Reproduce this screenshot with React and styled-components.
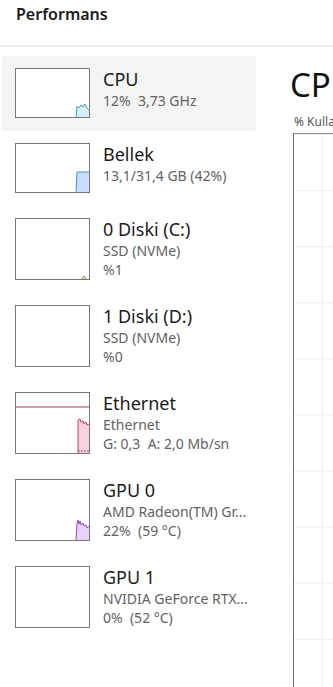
import React from "react";
import styled, { createGlobalStyle } from "styled-components";

const Global = createGlobalStyle`
  html, body { margin: 0; padding: 0; background: #ffffff; overflow: hidden; }
  body { font-family: "Noto Sans", "Open Sans", sans-serif; color: #1b1b1b; }
`;

const Page = styled.div`
  width: 100vw;
  height: 100vh;
  overflow: hidden;
  display: flex;
  flex-direction: column;
`;

const Header = styled.header`
  height: 47px;
  box-sizing: border-box;
  padding: 4px 0 0 16px;
  font-size: 16px;
  line-height: 20px;
  font-weight: 600;
  color: #1b1b1b;
  border-bottom: 2px solid #ececec;
  flex: 0 0 auto;
`;

const Body = styled.div`
  display: flex;
  flex: 1 1 auto;
  min-height: 0;
`;

const Sidebar = styled.nav`
  flex: 0 0 auto;
  width: 254px;
  min-width: 0;
  padding: 9px 0 0 2px;
  display: flex;
  flex-direction: column;
`;

const Row = styled.div`
  display: flex;
  align-items: flex-start;
  gap: 13px;
  padding: 12px 13px 13px;
  border-radius: 3px;
  min-width: 0;
  background: ${(p) => (p.$active ? "#f4f4f4" : "transparent")};
`;

const Thumb = styled.div`
  flex: 0 0 75px;
  height: ${(p) => p.$h}px;
  box-sizing: border-box;
  border: 1px solid #777777;
  background: #ffffff;
  overflow: hidden;
  svg { display: block; width: 100%; height: 100%; }
`;

const Info = styled.div`
  display: flex;
  flex-direction: column;
  white-space: pre;
  min-width: 0;
`;

const Name = styled.div`
  font-size: 18px;
  line-height: 22px;
  margin-bottom: 1px;
  color: #1b1b1b;
`;

const Sub = styled.div`
  font-size: 14px;
  line-height: 19px;
  color: #626262;
`;

const Main = styled.main`
  flex: 0 0 600px;
  padding: 18px 0 0 37px;
  display: flex;
  flex-direction: column;
`;

const Title = styled.h1`
  margin: 0 0 0 -3px;
  font-size: 33px;
  line-height: 40px;
  font-weight: 400;
  color: #111111;
  white-space: nowrap;
`;

const Label = styled.div`
  margin: 9px 0 0 1px;
  font-size: 12px;
  line-height: 16px;
  color: #555555;
  white-space: nowrap;
`;

const Chart = styled.div`
  margin-top: 3px;
  height: 562px;
  border-left: 1px solid #6e6e6e;
  border-top: 1px solid #8c8c8c;
  background-color: #ffffff;
  background-image:
    linear-gradient(to right, #efefef 1px, transparent 1px),
    linear-gradient(to bottom, #efefef 1px, transparent 1px);
  background-size: 29px 56.1px, 29px 56.1px;
  background-position: 28px 0, 0 0;
`;

const graphs = {
  cpu: (
    <svg viewBox="0 0 73 48" preserveAspectRatio="none">
      <polygon
        points="60,48 61,37 63,39 65,36 67,38 69,35 71,39 73,41 73,48"
        fill="#d7eef8"
      />
      <polyline
        points="60,48 61,37 63,39 65,36 67,38 69,35 71,39 73,41"
        fill="none"
        stroke="#3aa3d4"
        strokeWidth="1"
      />
    </svg>
  ),
  mem: (
    <svg viewBox="0 0 73 48" preserveAspectRatio="none">
      <polygon points="60,48 61,28 73,28 73,48" fill="#c9ddff" />
      <polyline points="60,48 61,28 73,28" fill="none" stroke="#4c8bef" strokeWidth="1" />
    </svg>
  ),
  disk: (
    <svg viewBox="0 0 73 60" preserveAspectRatio="none">
      <polygon points="66,60 68,57 70,60" fill="#e3f0cf" />
      <polyline points="66,60 68,57 70,60" fill="none" stroke="#6a9c2a" strokeWidth="1" />
    </svg>
  ),
  empty: <svg viewBox="0 0 73 60" preserveAspectRatio="none" />,
  eth: (
    <svg viewBox="0 0 73 60" preserveAspectRatio="none">
      <line x1="0" y1="14" x2="73" y2="14" stroke="#b9326d" strokeWidth="1" />
      <polygon
        points="62,60 62,27 64,26 65,29 67,28 68,31 70,29 71,32 73,31 73,60"
        fill="#f7d2df"
      />
      <polyline
        points="62,60 62,27 64,26 65,29 67,28 68,31 70,29 71,32 73,31"
        fill="none"
        stroke="#c23b74"
        strokeWidth="1"
      />
      <polyline points="62,58 73,58" fill="none" stroke="#c23b74" strokeWidth="1" strokeDasharray="2 1" />
    </svg>
  ),
  gpu0: (
    <svg viewBox="0 0 73 60" preserveAspectRatio="none">
      <polygon
        points="60,60 61,43 62,40 63,44 64,41 65,45 67,43 68,46 70,45 71,48 73,46 73,60"
        fill="#e6d3f6"
      />
      <polyline
        points="60,60 61,43 62,40 63,44 64,41 65,45 67,43 68,46 70,45 71,48 73,46"
        fill="none"
        stroke="#9447d6"
        strokeWidth="1"
      />
    </svg>
  ),
};

const items = [
  { name: "CPU", lines: ["12%  3,73 GHz"], h: 50, g: "cpu", active: true },
  { name: "Bellek", lines: ["13,1/31,4 GB (42%)"], h: 50, g: "mem" },
  { name: "0 Diski (C:)", lines: ["SSD (NVMe)", "%1"], h: 62, g: "disk" },
  { name: "1 Diski (D:)", lines: ["SSD (NVMe)", "%0"], h: 62, g: "empty" },
  { name: "Ethernet", lines: ["Ethernet", "G: 0,3  A: 2,0 Mb/sn"], h: 62, g: "eth" },
  { name: "GPU 0", lines: ["AMD Radeon(TM) Gr...", "22%  (59 °C)"], h: 62, g: "gpu0" },
  { name: "GPU 1", lines: ["NVIDIA GeForce RTX...", "0%  (52 °C)"], h: 62, g: "empty" },
];

export default function App() {
  return (
    <>
      <Global />
      <Page>
        <Header>Performans</Header>
        <Body>
          <Sidebar>
            {items.map((it) => (
              <Row key={it.name} $active={it.active}>
                <Thumb $h={it.h}>{graphs[it.g]}</Thumb>
                <Info>
                  <Name>{it.name}</Name>
                  {it.lines.map((l, i) => (
                    <Sub key={i}>{l}</Sub>
                  ))}
                </Info>
              </Row>
            ))}
          </Sidebar>
          <Main>
            <Title>CPU</Title>
            <Label>% Kullanım</Label>
            <Chart />
          </Main>
        </Body>
      </Page>
    </>
  );
}
